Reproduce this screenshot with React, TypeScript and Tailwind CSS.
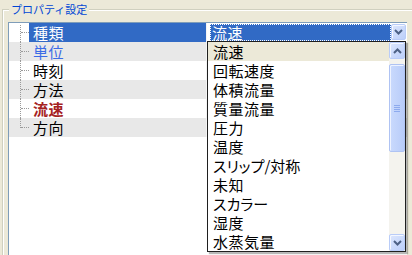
import React from 'react';

type Row = { label: string; color: string; selected?: boolean };

const rows: Row[] = [
    { label: '種類', color: 'text-white', selected: true },
    { label: '単位', color: 'text-[#3B6BE6]' },
    { label: '時刻', color: 'text-black' },
    { label: '方法', color: 'text-black' },
    { label: '流速', color: 'text-[#A52222] font-bold' },
    { label: '方向', color: 'text-black' },
];

// kana entries are set narrower, like the bitmap UI font in the original
const options = [
    { text: '流速' },
    { text: '回転速度' },
    { text: '体積流量' },
    { text: '質量流量' },
    { text: '圧力' },
    { text: '温度' },
    { text: 'スリップ/対称', narrow: true },
    { text: '未知' },
    { text: 'スカラー', narrow: true },
    { text: '湿度' },
    { text: '水蒸気量' },
];

const Chevron = ({ up }: { up?: boolean }) => (
    <svg width="9" height="6" viewBox="0 0 9 6">
        <path
            d={up ? 'M1 5 L4.5 1.5 L8 5' : 'M1 1 L4.5 4.5 L8 1'}
            fill="none"
            stroke="#4D6185"
            strokeWidth="2"
        />
    </svg>
);

const ScrollButton = ({ up, className = '' }: { up?: boolean; className?: string }) => (
    <div
        className={`flex items-center justify-center rounded-[2px] border border-[#B9CCF8] bg-[linear-gradient(135deg,#DCE6FD,#BCCFFA)] shadow-[inset_1px_1px_0_#F4F7FF] ${className}`}
    >
        <Chevron up={up} />
    </div>
);

// dotted tree connector in the left gutter
const TreeLine = ({ index, last }: { index: number; last: boolean }) => (
    <div className="relative w-[20px] shrink-0">
        <div
            className={`absolute left-[11px] border-l border-dotted border-[#9A9A9A] ${
                index === 0 ? 'top-[2px] bottom-0' : last ? 'top-0 h-[10px]' : 'top-0 bottom-0'
            }`}
        />
        <div className="absolute left-[12px] top-[9px] w-[8px] border-t border-dotted border-[#9A9A9A]" />
    </div>
);

const DropdownList = () => (
    <div className="absolute left-0 top-[18px] z-10 flex w-[199px] border border-[#1F1F1F] bg-white shadow-[2px_2px_1px_rgba(0,0,0,0.28)]">
        <div className="w-[181px]">
            {options.map((opt, i) => (
                <div
                    key={opt.text}
                    className={`h-[19px] pl-[5px] text-[15px] leading-[19px] text-black whitespace-nowrap ${
                        opt.narrow ? "[font-feature-settings:'palt']" : 'tracking-[0.5px]'
                    } ${i === 0 ? 'bg-[#ECE9D8]' : ''}`}
                >
                    {opt.text}
                </div>
            ))}
        </div>
        <div className="flex w-[16px] flex-col bg-[#F4F3EE]">
            <ScrollButton up className="h-[17px]" />
            <div className="h-[5px]" />
            <div className="flex h-[88px] flex-col items-center justify-center gap-[1px] rounded-[2px] border border-[#AFC3F3] bg-[linear-gradient(90deg,#CADAFD,#B8CCF9)] shadow-[inset_1px_1px_0_#EEF3FF]">
                {[0, 1, 2, 3].map((n) => (
                    <div key={n} className="h-[1px] w-[6px] bg-[#8DAAEE]" />
                ))}
            </div>
            <div className="flex-1" />
            <ScrollButton className="h-[17px]" />
        </div>
    </div>
);

export default function App() {
    return (
        <div className="relative h-[255px] w-[412px] overflow-hidden bg-[#ECE9D8] font-['Noto_Sans_CJK_JP',sans-serif]">
            <span className="absolute left-[9px] top-[1px] z-10 bg-[#ECE9D8] px-[2px] text-[11px] leading-[16px] text-[#0046D5]">
                プロパティ設定
            </span>

            <div className="ml-[2px] mt-[9px] h-[260px] border-l border-t border-[#D0D0BF] pl-[5px] pt-[12px] shadow-[inset_1px_1px_0_#FFFFFF]">
                <div className="h-[240px] w-[399px] border-l border-t border-[#7F9DB9] bg-white">
                    {rows.map((row, i) => (
                        <div
                            key={row.label}
                            className={`flex h-[19px] ${i % 2 === 1 ? 'bg-[#E8E8E8]' : 'bg-white'}`}
                        >
                            <TreeLine index={i} last={i === rows.length - 1} />
                            <div
                                className={`w-[177px] shrink-0 pl-[4px] text-[15px] leading-[19px] tracking-[0.5px] ${row.color} ${
                                    row.selected ? 'bg-[#316AC5]' : ''
                                }`}
                            >
                                {row.label}
                            </div>
                            <div className="w-[1px] shrink-0 bg-[#F4F4F4]" />
                            <div className="relative w-[199px] shrink-0">
                                {row.selected && (
                                    <>
                                        <div className="flex h-[19px] items-start pl-[3px] pt-[1px]">
                                            <div className="h-[17px] w-[181px] border border-dotted border-white bg-[#316AC5] pl-[1px] text-[15px] leading-[15px] tracking-[0.5px] text-white">
                                                流速
                                            </div>
                                            <ScrollButton className="h-[16px] w-[15px]" />
                                        </div>
                                        <DropdownList />
                                    </>
                                )}
                            </div>
                        </div>
                    ))}
                </div>
            </div>
        </div>
    );
}
